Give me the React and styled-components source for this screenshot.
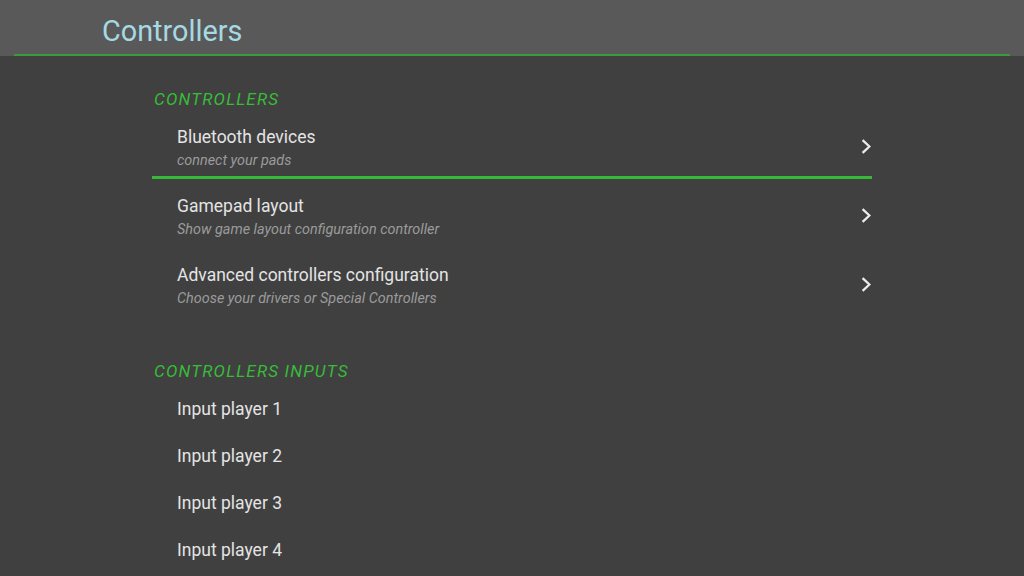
import styled, { createGlobalStyle } from "styled-components";

const GlobalStyle = createGlobalStyle`
  html, body {
    margin: 0;
    padding: 0;
    background: #404040;
    font-family: Roboto, "Noto Sans", "Liberation Sans", sans-serif;
  }
`;

const sections = [
  {
    title: "CONTROLLERS",
    items: [
      { label: "Bluetooth devices", hint: "connect your pads", focused: true },
      { label: "Gamepad layout", hint: "Show game layout configuration controller" },
      { label: "Advanced controllers configuration", hint: "Choose your drivers or Special Controllers" },
    ],
  },
  {
    title: "CONTROLLERS INPUTS",
    simple: true,
    items: [
      { label: "Input player 1" },
      { label: "Input player 2" },
      { label: "Input player 3" },
      { label: "Input player 4" },
    ],
  },
];

function Chevron() {
  return (
    <ChevronIcon viewBox="0 0 10 15" width="10" height="15">
      <polyline points="1.6,1.2 8.4,7.5 1.6,13.8" fill="none" stroke="#ececec" strokeWidth="2.3" />
    </ChevronIcon>
  );
}

export default function App() {
  return (
    <>
      <GlobalStyle />
      <Page>
        <Header>
          <HeaderBar>
            <Title>Controllers</Title>
          </HeaderBar>
        </Header>
        <Content>
          {sections.map((section) => (
            <Section key={section.title}>
              <SectionTitle>{section.title}</SectionTitle>
              <List $simple={section.simple}>
                {section.items.map((item) =>
                  section.simple ? (
                    <SimpleRow key={item.label}>
                      <Label>{item.label}</Label>
                    </SimpleRow>
                  ) : (
                    <Row key={item.label} $focused={item.focused}>
                      <Texts>
                        <Label>{item.label}</Label>
                        <Hint>{item.hint}</Hint>
                      </Texts>
                      <Chevron />
                    </Row>
                  )
                )}
              </List>
            </Section>
          ))}
        </Content>
      </Page>
    </>
  );
}

const Page = styled.div`
  width: 1024px;
  height: 576px;
  overflow: hidden;
  background: #404040;
`;

const Header = styled.header`
  background: #595959;
  padding: 0 14px;
`;

const HeaderBar = styled.div`
  height: 54px;
  border-bottom: 2px solid #3a9b3c;
  display: flex;
  align-items: center;
  padding-left: 88px;
  box-sizing: content-box;
`;

const Title = styled.h1`
  margin: 0;
  padding-top: 7px;
  font-size: 28.8px;
  font-weight: 400;
  color: #a6d9e2;
`;

const Content = styled.main`
  width: 720px;
  margin-left: 152px;
  padding-top: 29px;
  display: flex;
  flex-direction: column;
  gap: 40px;
`;

const Section = styled.section`
  display: flex;
  flex-direction: column;
`;

const SectionTitle = styled.h2`
  margin: 0;
  height: 28px;
  line-height: 28px;
  padding-left: 2px;
  font-size: 17px;
  font-weight: 400;
  font-style: italic;
  letter-spacing: 1.2px;
  color: #38bb38;
`;

const List = styled.div`
  display: flex;
  flex-direction: column;
  gap: ${(p) => (p.$simple ? "0" : "3px")};
`;

const Row = styled.div`
  height: 66px;
  box-sizing: border-box;
  padding: 14px 1px 0 25px;
  display: flex;
  align-items: flex-start;
  justify-content: space-between;
  border-bottom: 3px solid ${(p) => (p.$focused ? "#36b936" : "transparent")};

  svg {
    margin-top: 12px;
  }
`;

const SimpleRow = styled.div`
  height: 47px;
  padding-left: 25px;
  display: flex;
  align-items: center;
`;

const Texts = styled.div`
  display: flex;
  flex-direction: column;
  gap: 5px;
`;

const Label = styled.span`
  font-size: 17.5px;
  line-height: 20px;
  color: #e4e4e4;
`;

const Hint = styled.span`
  font-size: 14.4px;
  line-height: 18px;
  font-style: italic;
  color: #9b9b9b;
`;

const ChevronIcon = styled.svg`
  display: block;
  flex-shrink: 0;
`;
